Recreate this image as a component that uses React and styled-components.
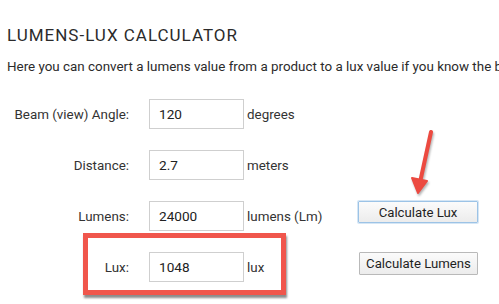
import React, { useState } from 'react';
import styled, { createGlobalStyle } from 'styled-components';

const GlobalStyle = createGlobalStyle`
  html, body {
    margin: 0;
    padding: 0;
    background: #ffffff;
  }
  body {
    font-family: Roboto, "Liberation Sans", Arial, sans-serif;
    color: #333333;
    overflow: hidden;
  }
`;

const fields = [
  { id: 'angle', label: 'Beam (view) Angle:', value: '120', unit: 'degrees' },
  { id: 'distance', label: 'Distance:', value: '2.7', unit: 'meters' },
  { id: 'lumens', label: 'Lumens:', value: '24000', unit: 'lumens (Lm)', button: 'Calculate Lux', focused: true },
  { id: 'lux', label: 'Lux:', value: '1048', unit: 'lux', button: 'Calculate Lumens' },
];

const App = () => {
  const [values, setValues] = useState(
    Object.fromEntries(fields.map(f => [f.id, f.value]))
  );

  const onChangeHandler = e => setValues({ ...values, [e.target.id]: e.target.value });

  return (
    <Page>
      <GlobalStyle />
      <Title>LUMENS-LUX CALCULATOR</Title>
      <Intro>Here you can convert a lumens value from a product to a lux value if you know the beam angle and distance.</Intro>
      <Form onSubmit={e => e.preventDefault()}>
        {fields.map(f => (
          <React.Fragment key={f.id}>
            <Label htmlFor={f.id}>{f.label}</Label>
            <Input type="text" id={f.id} value={values[f.id]} onChange={onChangeHandler} />
            <Unit>{f.unit}</Unit>
            <ButtonCell>
              {f.button && <CalcButton type="button" $focused={f.focused}>{f.button}</CalcButton>}
            </ButtonCell>
          </React.Fragment>
        ))}
      </Form>
      <Highlight />
      <Arrow width="30" height="70" viewBox="0 0 30 70">
        <path d="M21 3 L9 58" stroke="#ec4a40" strokeWidth="4" strokeLinecap="round" fill="none" />
        <path d="M2 49 L8 64 L17 52 Z" fill="#ec4a40" stroke="#ec4a40" strokeWidth="2" strokeLinejoin="round" />
      </Arrow>
    </Page>
  );
};

const Page = styled.div`
  position: relative;
  width: 499px;
  height: 304px;
  padding: 24px 0 0 7px;
  box-sizing: border-box;
  overflow: hidden;
`;

const Title = styled.h1`
  margin: 0;
  font-size: 17px;
  font-weight: 400;
  letter-spacing: 1px;
  line-height: 22px;
  color: #2b2b2b;
`;

const Intro = styled.p`
  margin: 11px 0 0;
  font-size: 13.4px;
  line-height: 20px;
  white-space: nowrap;
  overflow: hidden;
  color: #2b2b2b;
`;

const Form = styled.form`
  display: grid;
  grid-template-columns: 122px 95px 111px auto;
  grid-auto-rows: 30px;
  row-gap: 21px;
  margin-top: 22px;
  align-items: center;
`;

const Label = styled.label`
  text-align: right;
  font-size: 13.4px;
  color: #333333;
  padding-right: 20px;
  margin-right: -20px;
`;

const Input = styled.input`
  grid-column: 2;
  width: 95px;
  height: 30px;
  box-sizing: border-box;
  margin-left: 20px;
  margin-right: -20px;
  padding: 0 9px;
  border: 1px solid #cfcfcf;
  background: #ffffff;
  font-family: Roboto, "Liberation Sans", Arial, sans-serif;
  font-size: 13.6px;
  color: #222222;
  outline: none;
`;

const Unit = styled.span`
  margin-left: 23px;
  margin-right: -23px;
  font-size: 13.4px;
  color: #333333;
  white-space: nowrap;
`;

const ButtonCell = styled.div`
  align-self: start;
  display: flex;
`;

const CalcButton = styled.button`
  height: ${p => (p.$focused ? '22px' : '23px')};
  width: ${p => (p.$focused ? '120px' : '119px')};
  margin-left: ${p => (p.$focused ? '23px' : '24px')};
  padding: 0;
  font-family: Roboto, "Liberation Sans", Arial, sans-serif;
  font-size: 13.2px;
  color: #1f1f1f;
  background: linear-gradient(#fbfbfb, #ececec);
  border: 1px solid ${p => (p.$focused ? '#9cc3e6' : '#b9b9b9')};
  box-shadow: ${p => (p.$focused ? '0 0 0 1px #d5e6f5' : 'none')};
  border-radius: 1px;
`;

const Highlight = styled.div`
  position: absolute;
  left: 83px;
  top: 233px;
  width: 203px;
  height: 62px;
  box-sizing: border-box;
  border: 5px solid #f0564c;
  box-shadow: 1px 3px 2px rgba(0, 0, 0, 0.45);
`;

const Arrow = styled.svg`
  position: absolute;
  left: 410px;
  top: 129px;
  overflow: visible;
  filter: drop-shadow(1px 2px 1px rgba(0, 0, 0, 0.3));
`;

export default App;
